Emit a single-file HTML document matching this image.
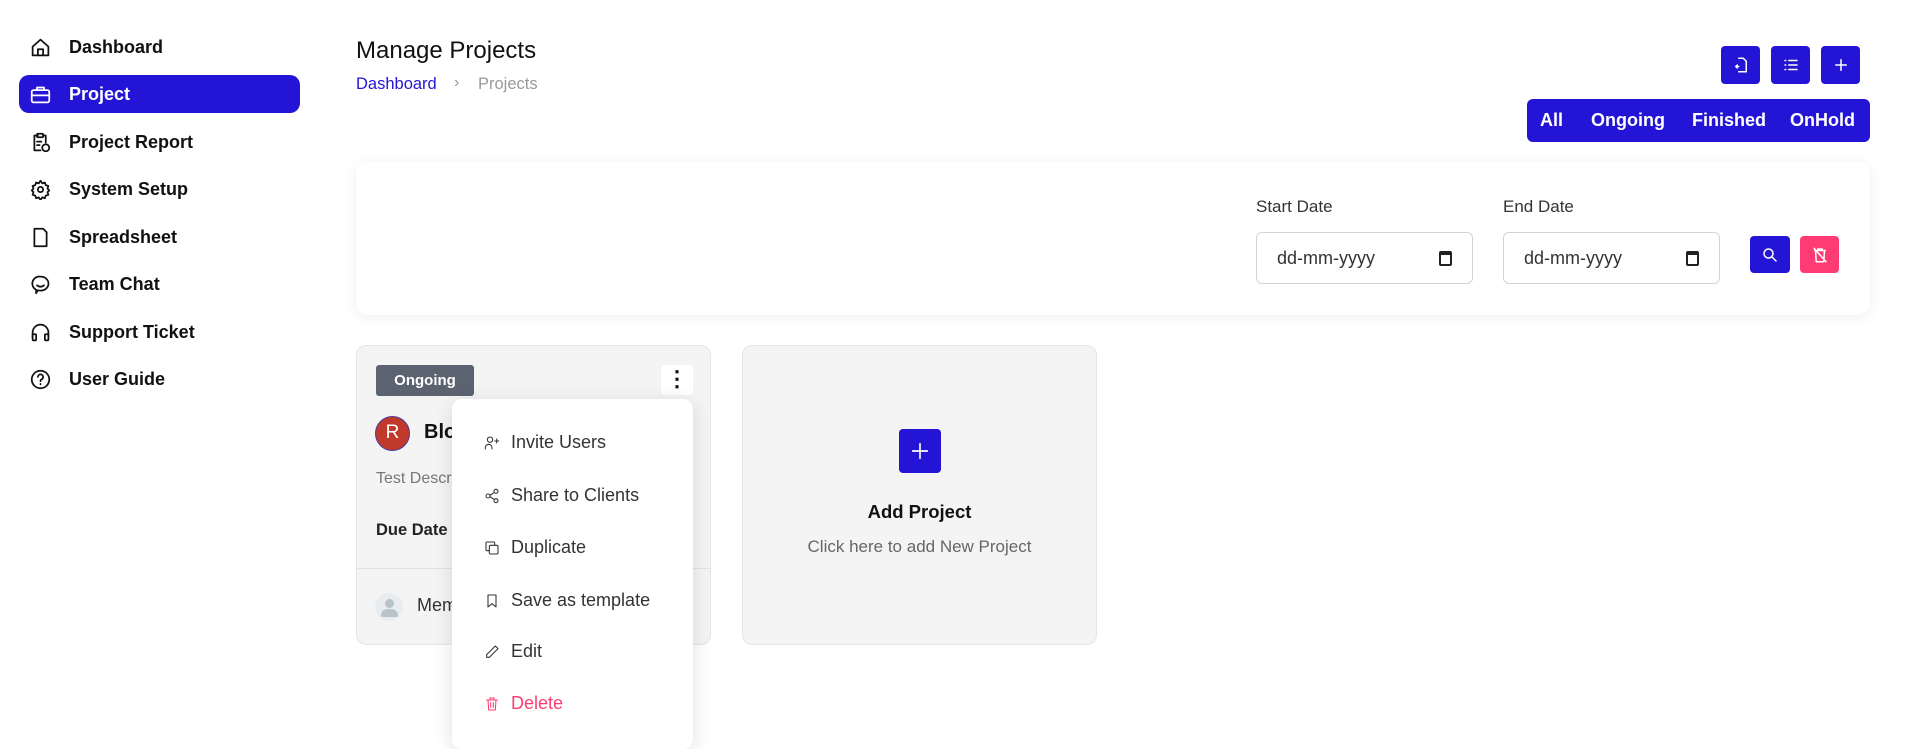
<!DOCTYPE html>
<html><head><meta charset="utf-8"><style>
*{box-sizing:border-box;margin:0;padding:0}
body{width:1907px;height:737px;overflow:hidden;background:#fff;font-family:"Liberation Sans",sans-serif;color:#111;position:relative}
.abs{position:absolute}
.nav{position:absolute;left:19px;width:281px;height:38px;display:flex;align-items:center;font-size:18px;font-weight:600;border-radius:10px}
.nav svg{position:absolute;left:11px;width:21px;height:21px;fill:none;stroke:#111;stroke-width:2;stroke-linecap:round;stroke-linejoin:round}
.nav span{position:absolute;left:50px}
.nav.act{background:#2415d6;color:#fff}
.nav.act svg{stroke:#fff}
.btn{position:absolute;background:#2415d6;border-radius:4px;display:flex;align-items:center;justify-content:center}
.btn svg{width:18px;height:18px;fill:none;stroke:#fff;stroke-width:2;stroke-linecap:round;stroke-linejoin:round}
.inp{position:absolute;top:232px;width:217px;height:52px;border:1px solid #d4d4d8;border-radius:6px;font-size:18px;color:#333;padding:0 0 0 20px;display:flex;align-items:center}
.inp i{position:absolute;right:20px;top:18px;width:13px;height:15px;border:2px solid #222;border-top-width:4px;border-radius:2px}
.lbl{position:absolute;top:197px;font-size:17px;color:#333}
.mi{position:absolute;left:484px;font-size:18px;color:#333;display:flex;align-items:center}
.mi svg{width:16px;height:16px;fill:none;stroke:#333;stroke-width:1.6;stroke-linecap:round;stroke-linejoin:round;margin-right:11px}
</style></head><body>

<div class="nav" style="top:28px"><svg viewBox="0 0 24 24"><path d="M3 11l9-8 9 8v10H3z"/><path d="M9 21v-7h6v7"/></svg><span>Dashboard</span></div>
<div class="nav act" style="top:75px"><svg viewBox="0 0 24 24"><rect x="2" y="7" width="20" height="14" rx="2"/><path d="M8 7V4h8v3M2 13h20"/></svg><span>Project</span></div>
<div class="nav" style="top:123px"><svg viewBox="0 0 24 24"><path d="M15 4h3v8M9 4H5v17h7"/><rect x="8" y="2" width="7" height="4" rx="1"/><path d="M8 11h5M8 15h3"/><circle cx="18" cy="18" r="4"/></svg><span>Project Report</span></div>
<div class="nav" style="top:170px"><svg viewBox="0 0 24 24"><circle cx="12" cy="12" r="3"/><path d="M12 2l2 3 3-1 1 3 3 1-1 3 2 2-2 2 1 3-3 1-1 3-3-1-2 3-2-3-3 1-1-3-3-1 1-3-2-2 2-2-1-3 3-1 1-3 3 1z"/></svg><span>System Setup</span></div>
<div class="nav" style="top:218px"><svg viewBox="0 0 24 24"><path d="M5 2h10l4 4v16H5z"/></svg><span>Spreadsheet</span></div>
<div class="nav" style="top:265px"><svg viewBox="0 0 24 24"><path d="M12 3a9 8 0 1 1-3 15.5L7 22v-4A8 8 0 0 1 12 3z"/><path d="M8 13q4 3 8 0"/></svg><span>Team Chat</span></div>
<div class="nav" style="top:313px"><svg viewBox="0 0 24 24"><path d="M3 18v-6a9 9 0 0 1 18 0v6"/><rect x="3" y="14" width="4" height="7" rx="1"/><rect x="17" y="14" width="4" height="7" rx="1"/></svg><span>Support Ticket</span></div>
<div class="nav" style="top:360px"><svg viewBox="0 0 24 24"><circle cx="12" cy="12" r="10"/><path d="M9 9a3 3 0 1 1 4 3c-1 .5-1 1-1 2M12 17v.5"/></svg><span>User Guide</span></div>

<div class="abs" style="left:356px;top:37px;font-size:24px;color:#111">Manage Projects</div>
<div class="abs" style="left:356px;top:75px;font-size:16.5px;color:#2415d6">Dashboard</div>
<div class="abs" style="left:454px;top:74px;font-size:16px;color:#999">›</div>
<div class="abs" style="left:478px;top:75px;font-size:16.5px;color:#999">Projects</div>

<div class="btn" style="left:1721px;top:46px;width:39px;height:38px"><svg viewBox="0 0 24 24"><path d="M9 3h6l4 4v14H9M9 14H5M7 12l-2 2 2 2"/></svg></div>
<div class="btn" style="left:1771px;top:46px;width:39px;height:38px"><svg viewBox="0 0 24 24"><path d="M9 6h11M9 12h11M9 18h11M4 6h1M4 12h1M4 18h1"/></svg></div>
<div class="btn" style="left:1821px;top:46px;width:39px;height:38px"><svg viewBox="0 0 24 24"><path d="M12 5v14M5 12h14"/></svg></div>

<div class="abs" style="left:1527px;top:99px;width:343px;height:43px;background:#2415d6;border-radius:6px;color:#fff;font-size:18px;font-weight:600">
<span class="abs" style="left:13px;top:11px">All</span><span class="abs" style="left:64px;top:11px">Ongoing</span><span class="abs" style="left:165px;top:11px">Finished</span><span class="abs" style="left:263px;top:11px">OnHold</span></div>

<div class="abs" style="left:356px;top:162px;width:1514px;height:153px;background:#fff;border-radius:12px;box-shadow:0 2px 14px rgba(0,0,0,.07)"></div>
<div class="lbl" style="left:1256px">Start Date</div>
<div class="lbl" style="left:1503px">End Date</div>
<div class="inp" style="left:1256px">dd-mm-yyyy<i></i></div>
<div class="inp" style="left:1503px">dd-mm-yyyy<i></i></div>
<div class="btn" style="left:1750px;top:236px;width:40px;height:37px"><svg viewBox="0 0 24 24"><circle cx="10" cy="10" r="6"/><path d="M15 15l5 5"/></svg></div>
<div class="btn" style="left:1800px;top:236px;width:39px;height:37px;background:#ff3b73"><svg viewBox="0 0 24 24"><path d="M5 6h14M9 6V4h6v2M6 6l1 15h10l1-15M4 3l16 18"/></svg></div>

<div class="abs" style="left:356px;top:345px;width:355px;height:300px;background:#f4f4f5;border:1px solid #e6e6e8;border-radius:10px"></div>
<div class="abs" style="left:376px;top:365px;width:98px;height:31px;background:#5b6270;border-radius:3px;color:#fff;font-size:15px;font-weight:700;text-align:center;line-height:31px">Ongoing</div>
<div class="abs" style="left:661px;top:365px;width:32px;height:30px;background:#fff;border-radius:4px;font-size:22px;font-weight:900;text-align:center;line-height:28px">⋮</div>
<div class="abs" style="left:375px;top:416px;width:35px;height:35px;border-radius:50%;background:#c0392b;border:1.5px solid #4a3aa0;color:#fff;font-size:19px;text-align:center;line-height:32px">R</div>
<div class="abs" style="left:424px;top:421px;font-size:20px;font-weight:700">Blo</div>
<div class="abs" style="left:376px;top:470px;font-size:16px;color:#777">Test Descr</div>
<div class="abs" style="left:376px;top:521px;font-size:16.5px;font-weight:700;color:#222">Due Date</div>
<div class="abs" style="left:357px;top:568px;width:353px;height:1px;background:#e2e2e4"></div>
<div class="abs" style="left:374px;top:592px;width:30px;height:30px;border-radius:50%;background:#e8ecee;border:1px solid #f5f5f5"><div class="abs" style="left:10px;top:6px;width:9px;height:9px;border-radius:50%;background:#b8c4ca"></div><div class="abs" style="left:6px;top:16px;width:17px;height:8px;border-radius:8px 8px 2px 2px;background:#b8c4ca"></div></div>
<div class="abs" style="left:417px;top:595px;font-size:18px;color:#333">Mem</div>

<div class="abs" style="left:452px;top:399px;width:241px;height:350px;background:#fff;border-radius:10px;box-shadow:0 4px 20px rgba(0,0,0,.12)"></div>
<div class="mi" style="top:432px"><svg viewBox="0 0 24 24"><circle cx="9" cy="7" r="4"/><path d="M2 21v-2a5 5 0 0 1 10 0v2M19 6v6M16 9h6"/></svg>Invite Users</div>
<div class="mi" style="top:485px"><svg viewBox="0 0 24 24"><circle cx="18" cy="5" r="3"/><circle cx="6" cy="12" r="3"/><circle cx="18" cy="19" r="3"/><path d="M9 11l6-4M9 13l6 4"/></svg>Share to Clients</div>
<div class="mi" style="top:537px"><svg viewBox="0 0 24 24"><rect x="8" y="8" width="13" height="13" rx="2"/><path d="M16 8V4a1 1 0 0 0-1-1H4a1 1 0 0 0-1 1v11a1 1 0 0 0 1 1h4"/></svg>Duplicate</div>
<div class="mi" style="top:590px"><svg viewBox="0 0 24 24"><path d="M6 3h12v18l-6-5-6 5z"/></svg>Save as template</div>
<div class="mi" style="top:641px"><svg viewBox="0 0 24 24"><path d="M17 3l4 4L8 20H4v-4z"/></svg>Edit</div>
<div class="mi" style="top:693px;color:#ff3b73"><svg viewBox="0 0 24 24" style="stroke:#ff3b73"><path d="M4 6h16M9 6V3h6v3M6 6l1 15h10l1-15M10 10v7M14 10v7"/></svg>Delete</div>

<div class="abs" style="left:742px;top:345px;width:355px;height:300px;background:#f4f4f5;border:1px solid #e6e6e8;border-radius:10px"></div>
<div class="btn" style="left:899px;top:429px;width:42px;height:44px"><svg viewBox="0 0 24 24" style="width:22px;height:22px;stroke-width:1.8"><path d="M12 4v16M4 12h16"/></svg></div>
<div class="abs" style="left:742px;top:501px;width:355px;text-align:center;font-size:18.5px;font-weight:700">Add Project</div>
<div class="abs" style="left:742px;top:537px;width:355px;text-align:center;font-size:17px;color:#666">Click here to add New Project</div>
</body></html>
